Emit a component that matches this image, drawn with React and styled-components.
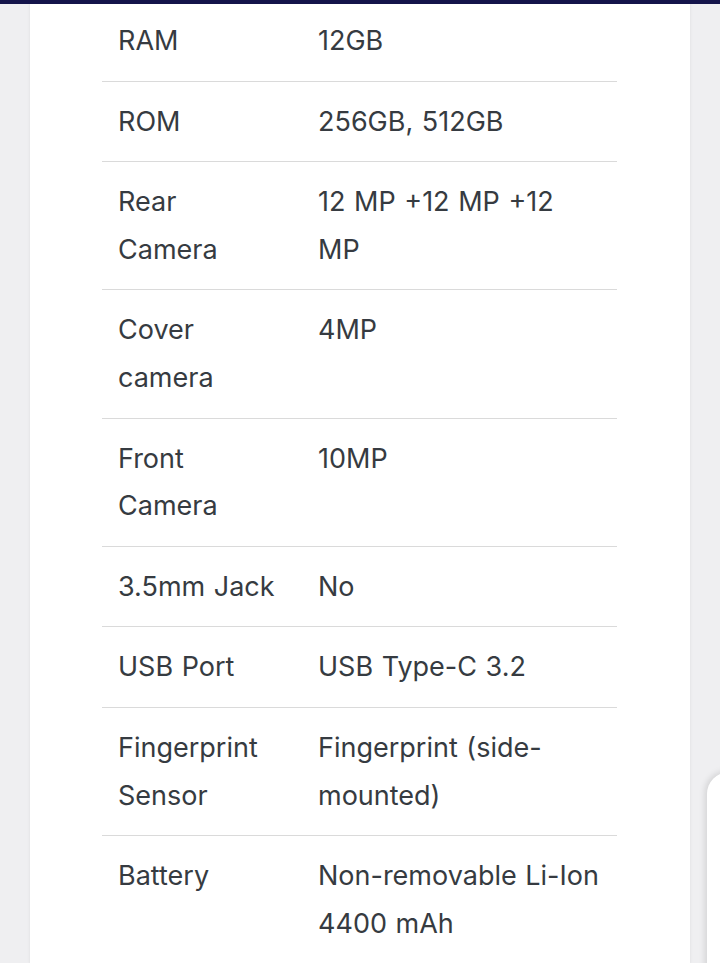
import React from "react";
import styled, { createGlobalStyle } from "styled-components";

const specs = [
  ["RAM", "12GB"],
  ["ROM", "256GB, 512GB"],
  ["Rear Camera", "12 MP +12 MP +12 MP"],
  ["Cover camera", "4MP"],
  ["Front Camera", "10MP"],
  ["3.5mm Jack", "No"],
  ["USB Port", "USB Type-C 3.2"],
  ["Fingerprint Sensor", "Fingerprint (side-mounted)"],
  ["Battery", "Non-removable Li-Ion 4400 mAh"],
];

const GlobalStyle = createGlobalStyle`
  html, body {
    margin: 0;
    padding: 0;
    background: #efeff1;
    font-family: Inter, "Noto Sans", sans-serif;
  }
`;

const TopBar = styled.div`
  position: fixed;
  top: 0;
  left: 0;
  right: 0;
  height: 4px;
  background: #14144a;
  z-index: 5;
`;

const Page = styled.div`
  height: 963px;
  overflow: hidden;
  position: relative;
`;

const Card = styled.div`
  margin: 0 30px;
  background: #fff;
  box-shadow: 0 0 3px rgba(0, 0, 0, 0.08);
  padding: 1px 73px 0 72px;
  min-height: 963px;
`;

const SpecTable = styled.table`
  width: 100%;
  table-layout: fixed;
  border-collapse: collapse;
  color: #363b41;
  font-size: 27px;
  word-spacing: 1px;
  line-height: 47.6px;
`;

const Row = styled.tr`
  border-bottom: 1px solid #dadada;
  &:last-child {
    border-bottom: none;
  }
`;

const Cell = styled.td`
  padding: 16px;
  vertical-align: top;
`;

const LabelCell = styled(Cell)`
  width: 162px;
  padding-right: 22px;
`;

const FloatPanel = styled.div`
  position: absolute;
  left: 707px;
  top: 772px;
  width: 60px;
  height: 300px;
  background: #fff;
  border-radius: 22px 0 0 0;
  box-shadow: -2px -1px 6px rgba(0, 0, 0, 0.12);
`;

export default function App() {
  return (
    <Page>
      <GlobalStyle />
      <TopBar />
      <Card>
        <SpecTable>
          <tbody>
            {specs.map(([label, value]) => (
              <Row key={label}>
                <LabelCell>{label}</LabelCell>
                <Cell>{value}</Cell>
              </Row>
            ))}
          </tbody>
        </SpecTable>
      </Card>
      <FloatPanel />
    </Page>
  );
}
